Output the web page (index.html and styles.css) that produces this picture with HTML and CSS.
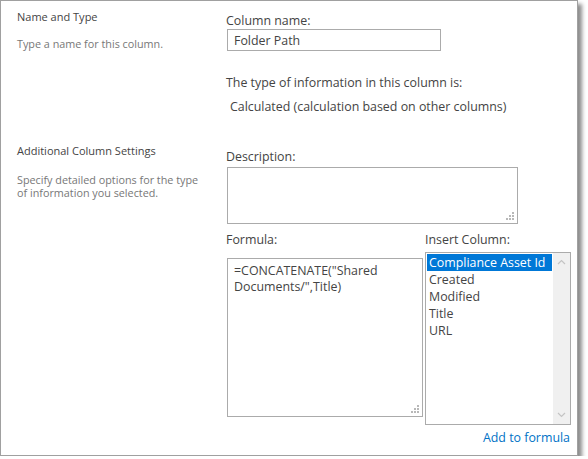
FILE: index.html
```html
<!DOCTYPE html>
<html>
<head>
<meta charset="utf-8">
<link rel="stylesheet" href="styles.css">
</head>
<body>
<div class="frame">
  <div class="section first">
    <div class="side">
      <div class="title">Name and Type</div>
      <div class="help help-one">Type a name for this column.</div>
    </div>
    <div class="main">
      <div class="label">Column name:</div>
      <input class="textbox" type="text" value="Folder Path">
      <div class="label type-label">The type of information in this column is:</div>
      <div class="label type-value">Calculated (calculation based on other columns)</div>
    </div>
  </div>
  <div class="section second">
    <div class="side">
      <div class="title">Additional Column Settings</div>
      <div class="help help-two">Specify detailed options for the type of information you selected.</div>
    </div>
    <div class="main">
      <div class="label">Description:</div>
      <div class="area desc-area">
        <textarea class="area-input"></textarea>
        <svg class="grip" width="8" height="8" viewBox="0 0 8 8"><rect x="6" y="0" width="2" height="2"/><rect x="3" y="3" width="2" height="2"/><rect x="6" y="3" width="2" height="2"/><rect x="0" y="6" width="2" height="2"/><rect x="3" y="6" width="2" height="2"/><rect x="6" y="6" width="2" height="2"/></svg>
      </div>
      <div class="formula-row">
        <div class="formula-col">
          <div class="label">Formula:</div>
          <div class="area formula-area">
            <textarea class="area-input formula-input">=CONCATENATE("Shared Documents/",Title)</textarea>
            <svg class="grip" width="8" height="8" viewBox="0 0 8 8"><rect x="6" y="0" width="2" height="2"/><rect x="3" y="3" width="2" height="2"/><rect x="6" y="3" width="2" height="2"/><rect x="0" y="6" width="2" height="2"/><rect x="3" y="6" width="2" height="2"/><rect x="6" y="6" width="2" height="2"/></svg>
          </div>
        </div>
        <div class="insert-col">
          <div class="label">Insert Column:</div>
          <div class="listbox">
            <div class="items">
              <div class="item selected">Compliance Asset Id</div>
              <div class="item">Created</div>
              <div class="item">Modified</div>
              <div class="item">Title</div>
              <div class="item">URL</div>
            </div>
            <div class="scrollbar">
              <svg width="9" height="6" viewBox="0 0 9 6"><path d="M1 5 L4.5 1.5 L8 5" fill="none" stroke="#c4c4c4" stroke-width="1.2"/></svg>
              <svg width="9" height="6" viewBox="0 0 9 6"><path d="M1 1 L4.5 4.5 L8 1" fill="none" stroke="#c4c4c4" stroke-width="1.2"/></svg>
            </div>
          </div>
          <div class="link-row"><a class="link" href="#">Add to formula</a></div>
        </div>
      </div>
    </div>
  </div>
</div>
</body>
</html>
```

FILE: styles.css
```css
html, body {
  margin: 0;
  padding: 0;
  background: #ffffff;
}
body {
  font-family: "Open Sans", "Noto Sans", sans-serif;
  color: #444444;
}
.frame {
  width: 576px;
  height: 447px;
  border: 1px solid #a0a0a0;
  background: #ffffff;
  box-shadow: 4px 4px 4px rgba(0, 0, 0, 0.45);
  padding-top: 7px;
  box-sizing: content-box;
}
.section {
  display: grid;
  grid-template-columns: 225px 1fr;
}
.side {
  padding-left: 16px;
}
.title {
  font-size: 11px;
  line-height: 17px;
  color: #444444;
}
.help {
  font-size: 10.8px;
  color: #777777;
}
.help-one {
  margin-top: 12px;
  line-height: 14px;
}
.help-two {
  margin-top: 14px;
  line-height: 13px;
  width: 192px;
}
.first .main {
  padding-top: 4px;
}
.second {
  margin-top: 27px;
}
.second .main {
  padding-top: 6px;
}
.label {
  font-size: 12.4px;
  line-height: 17px;
  color: #444444;
  white-space: nowrap;
}
.textbox {
  display: block;
  box-sizing: border-box;
  width: 214px;
  height: 22px;
  margin: 0 0 0 1px;
  padding: 0 6px;
  border: 1px solid #ababab;
  font-family: inherit;
  font-size: 12.4px;
  color: #444444;
  outline: none;
}
.type-label {
  margin-top: 23px;
}
.type-value {
  margin-top: 7px;
  padding-left: 4px;
}
.area {
  position: relative;
  margin-left: 1px;
  border: 1px solid #ababab;
  box-sizing: border-box;
}
.desc-area {
  width: 291px;
  height: 57px;
  margin-top: 2px;
}
.area-input {
  display: block;
  width: 100%;
  height: 100%;
  box-sizing: border-box;
  border: none;
  margin: 0;
  padding: 4px 6px;
  resize: none;
  outline: none;
  font-family: inherit;
  font-size: 12.4px;
  line-height: 17px;
  color: #444444;
  overflow: hidden;
  background: transparent;
}
.grip {
  position: absolute;
  right: 3px;
  bottom: 3px;
  fill: #b8b8b8;
}
.formula-row {
  display: flex;
  margin-top: 7px;
}
.formula-col {
  width: 199px;
}
.formula-area {
  width: 196px;
  height: 159px;
  margin-top: 10px;
}
.formula-input {
  padding: 4px 6px;
  line-height: 16px;
}
.insert-col {
  display: flex;
  flex-direction: column;
  width: 146px;
}
.listbox {
  display: flex;
  width: 146px;
  height: 173px;
  margin-top: 4px;
  border: 1px solid #ababab;
  box-sizing: border-box;
}
.items {
  flex: 1;
  padding: 1px 1px 0 1px;
}
.item {
  font-size: 12.4px;
  line-height: 17px;
  padding-left: 2px;
  color: #444444;
  white-space: nowrap;
}
.item.selected {
  background: #0078d7;
  color: #ffffff;
}
.scrollbar {
  width: 17px;
  background: #f0f0f0;
  display: flex;
  flex-direction: column;
  justify-content: space-between;
  align-items: center;
  padding: 6px 0 6px;
}
.link-row {
  display: flex;
  justify-content: flex-end;
  margin-top: 4px;
  padding-right: 1px;
}
.link {
  font-size: 12.4px;
  line-height: 17px;
  color: #0072c6;
  text-decoration: none;
}
```
